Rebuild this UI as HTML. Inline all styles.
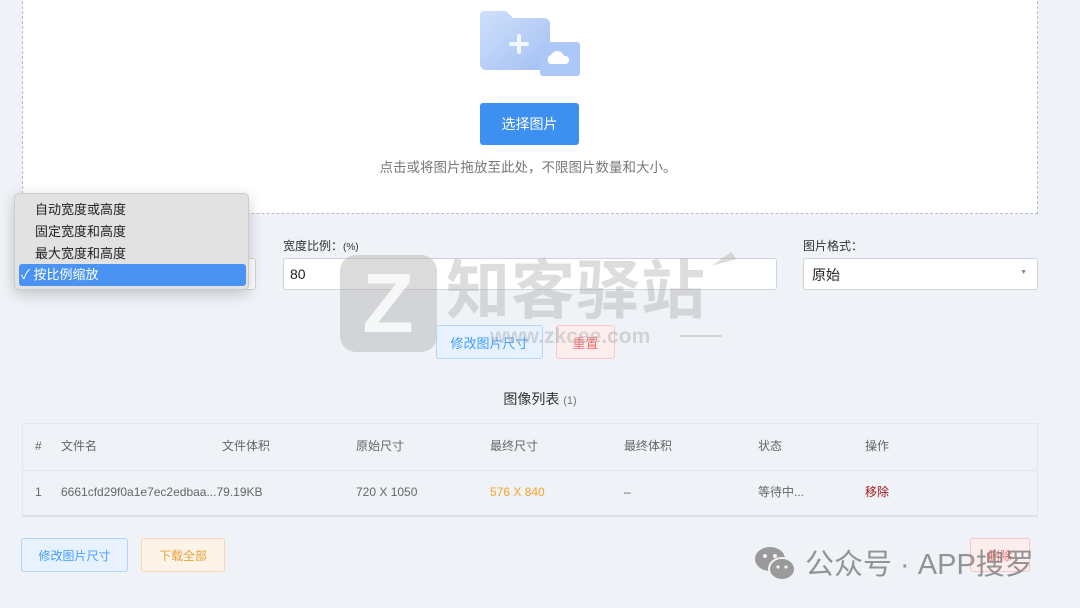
<!DOCTYPE html>
<html><head><meta charset="utf-8"><style>
*{margin:0;padding:0;box-sizing:border-box}
body{width:1080px;height:608px;background:#eff2f7;font-family:"Liberation Sans","Noto Sans CJK SC",sans-serif;position:relative;overflow:hidden;color:#333}
.abs{position:absolute}
.up{left:22px;top:-4px;width:1016px;height:218px;background:#fff;border:1px dashed #b8bcc4;border-top:none}
.btn{position:absolute;display:flex;align-items:center;justify-content:center;font-size:13px;border-radius:3px}
.t{position:absolute;font-size:12px;line-height:16px;color:#666;white-space:nowrap}
</style></head><body>
<div class="abs up"></div>
<svg class="abs" style="left:478px;top:8px" width="104" height="70" viewBox="0 0 104 70">
<defs><linearGradient id="g" x1="0" y1="0" x2="1" y2="1"><stop offset="0" stop-color="#cfe0fb"/><stop offset="1" stop-color="#a3c0f3"/></linearGradient></defs>
<path d="M6 3h22l7 7h31a6 6 0 0 1 6 6v40a6 6 0 0 1-6 6H8a6 6 0 0 1-6-6V7a4 4 0 0 1 4-4z" fill="url(#g)"/>
<rect x="62" y="34" width="40" height="34" rx="3" fill="#adc8f6"/>
<rect x="39" y="26" width="4" height="20" rx="2" fill="#f2f6fe"/><rect x="31" y="34" width="20" height="4" rx="2" fill="#f2f6fe"/>
<path d="M72 56a5 5 0 0 1 1-9 7 7 0 0 1 13 1 4 4 0 0 1 2 8z" fill="#fff"/>
</svg>
<div class="btn" style="left:480px;top:103px;width:99px;height:42px;background:#3d8ff0;color:#fff;font-size:14px">选择图片</div>
<div class="t" style="left:0;width:1056px;text-align:center;top:160px;font-size:13.5px;color:#777">点击或将图片拖放至此处，不限图片数量和大小。</div>

<div class="abs" style="left:22px;top:258px;width:234px;height:32px;background:#fff;border:1px solid #d0d3d8;border-radius:3px"></div>
<div class="t" style="left:283px;top:238px;color:#333">宽度比例：<span style="font-size:10px">(%)</span></div>
<div class="abs" style="left:283px;top:258px;width:494px;height:32px;background:#fff;border:1px solid #d0d3d8;border-radius:3px;font-size:14px;padding:7px 6px;color:#222">80</div>
<div class="t" style="left:803px;top:238px;color:#333">图片格式：</div>
<div class="abs" style="left:803px;top:258px;width:235px;height:32px;background:#fff;border:1px solid #d0d3d8;border-radius:3px;font-size:14px;padding:6px 8px;color:#222">原始<span style="position:absolute;right:10px;top:10px;font-size:7px;color:#888">▼</span></div>

<!-- watermark -->
<div class="abs" style="left:340px;top:255px;width:97px;height:97px;border-radius:16px;background:rgba(175,175,175,.45)"></div>
<div class="abs" style="left:358px;top:270px;width:60px;height:66px;font:bold 84px/66px 'Liberation Sans',sans-serif;color:rgba(255,255,255,.8);text-align:center">Z</div>
<div class="abs" style="left:446px;top:250px;font:bold 64px/72px 'Noto Sans CJK SC',sans-serif;color:rgba(170,170,170,.4);letter-spacing:1px">知客驿站</div>
<div class="abs" style="left:712px;top:258px;width:0;height:0;border-left:24px solid transparent;border-top:9px solid rgba(170,170,170,.4);transform:rotate(-35deg)"></div>

<div class="btn" style="left:436px;top:325px;width:107px;height:34px;background:#e8f2fe;border:1px solid #b3d4fb;color:#409eff">修改图片尺寸</div>
<div class="btn" style="left:556px;top:325px;width:59px;height:34px;background:#fdeeee;border:1px solid #f8c6c6;color:#f56c6c">重置</div>
<div class="abs" style="left:490px;top:324px;font:bold 21px/26px 'Liberation Sans',sans-serif;color:rgba(170,170,170,.45)">www.zkcee.com</div>
<div class="abs" style="left:680px;top:335px;width:42px;height:2px;background:rgba(170,170,170,.45)"></div>

<!-- dropdown -->
<div class="abs" style="left:14px;top:193px;width:235px;height:97px;background:#e2e2e2;border:1px solid #ccc;border-radius:5px;box-shadow:0 4px 14px rgba(0,0,0,.2);font-size:13px;line-height:18px;color:#222">
<div class="abs" style="left:20px;top:7px">自动宽度或高度</div>
<div class="abs" style="left:20px;top:29px">固定宽度和高度</div>
<div class="abs" style="left:20px;top:51px">最大宽度和高度</div>
<div class="abs" style="left:4px;top:70px;width:227px;height:22px;background:#4a93f2;border-radius:3px;color:#fff;padding:2px 0 0 2px">✓ 按比例缩放</div>
</div>

<div class="t" style="left:0;width:1080px;text-align:center;top:391px;font-size:14px;color:#333">图像列表 <span style="font-size:11px;color:#777">(1)</span></div>
<div class="abs" style="left:22px;top:423px;width:1016px;height:94px;border:1px solid #e3e6ea;border-bottom:2px solid #dde1e6">
<div class="abs" style="left:0;top:46px;width:1014px;height:1px;background:#e3e6ea"></div></div>
<div class="t" style="left:35px;top:438px">#</div><div class="t" style="left:61px;top:438px">文件名</div><div class="t" style="left:222px;top:438px">文件体积</div><div class="t" style="left:356px;top:438px">原始尺寸</div><div class="t" style="left:490px;top:438px">最终尺寸</div><div class="t" style="left:624px;top:438px">最终体积</div><div class="t" style="left:758px;top:438px">状态</div><div class="t" style="left:865px;top:438px">操作</div>
<div class="t" style="left:35px;top:484px">1</div><div class="t" style="left:61px;top:484px">6661cfd29f0a1e7ec2edbaa...79.19KB</div><div class="t" style="left:356px;top:484px">720 X 1050</div><div class="t" style="left:490px;top:484px;color:#f5a623">576 X 840</div><div class="t" style="left:624px;top:484px">–</div><div class="t" style="left:758px;top:484px">等待中...</div><div class="t" style="left:865px;top:484px;color:#a01818">移除</div>

<div class="btn" style="left:21px;top:538px;width:107px;height:34px;background:#e8f2fe;border:1px solid #b3d4fb;color:#409eff;font-size:12px">修改图片尺寸</div>
<div class="btn" style="left:141px;top:538px;width:84px;height:34px;background:#fdf3e8;border:1px solid #f6d8b0;color:#e6a23c;font-size:12px">下载全部</div>
<div class="btn" style="left:970px;top:538px;width:60px;height:34px;background:#fdeeee;border:1px solid #f8c6c6;color:#f56c6c;font-size:12px">删除</div>
<svg class="abs" style="left:754px;top:545px" width="44" height="38" viewBox="0 0 44 38"><ellipse cx="16" cy="14" rx="15" ry="12" fill="#9a9a9a"/><ellipse cx="28" cy="24" rx="13" ry="11" fill="#9a9a9a" stroke="#eff2f7" stroke-width="2"/><circle cx="11" cy="11" r="2" fill="#eff2f7"/><circle cx="21" cy="11" r="2" fill="#eff2f7"/><circle cx="24" cy="22" r="1.6" fill="#eff2f7"/><circle cx="32" cy="22" r="1.6" fill="#eff2f7"/></svg>
<div class="abs" style="left:805px;top:545px;font-size:29px;line-height:40px;color:rgba(130,130,130,.85);white-space:nowrap">公众号 · APP搜罗</div>
</body></html>
